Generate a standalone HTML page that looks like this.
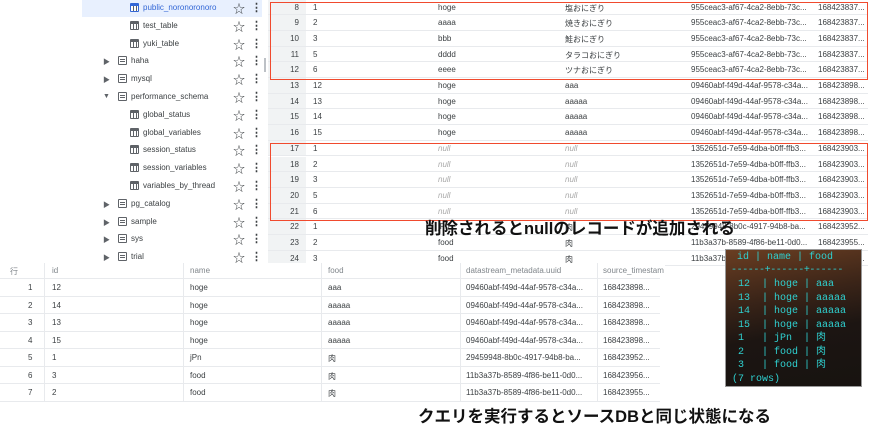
<!DOCTYPE html><html><head><meta charset="utf-8"><style>
*{margin:0;padding:0;box-sizing:border-box}
body{width:883px;height:426px;background:#fff;position:relative;overflow:hidden;font-family:"Liberation Sans","Noto Sans CJK JP",sans-serif;font-size:8px;color:#3c4043}
.a{position:absolute;white-space:nowrap}
.sr{position:absolute;left:82px;width:180px;height:18px}
.ic{position:absolute;width:9px;height:9px;border:1.3px solid #5f6368;border-radius:1px}
.ic::after{content:"";position:absolute;left:1px;right:1px;top:2px;height:1px;background:#5f6368;box-shadow:0 2px 0 #5f6368}
.tt{position:absolute;width:9px;height:9px;background:#5f6368;border-radius:1px}
.tt::after{content:"";position:absolute;left:1px;right:1px;top:3px;bottom:1px;background:repeating-linear-gradient(90deg,#fff 0 2px,#5f6368 2px 3px)}
.g{position:absolute;left:268px;width:600px;height:15.7px;border-bottom:1px solid #e8eaed}
.g span{position:absolute;top:3px}
.rn{position:absolute;left:0;top:0;width:38px;height:100%;background:#f1f3f4;text-align:right;padding-right:7px;padding-top:3px}
.b{position:absolute;left:0;width:660px;height:17.5px;border-bottom:1px solid #e8eaed}
.b span{position:absolute;top:4px}
.t{position:absolute;left:12px;font-family:"Liberation Mono","Noto Sans CJK JP",monospace;font-size:10px;line-height:12px;height:12px;color:#2fd0d0;white-space:pre}
.red{position:absolute;border:1.5px solid #f04a2e}
.cap{position:absolute;font-weight:bold;font-size:16.5px;color:#111;white-space:nowrap}
</style></head><body>
<div class="sr" style="top:0;height:17px;background:#e8f0fe"></div>
<div id="side"></div>
<div class="a" style="left:264px;top:58px;width:2px;height:14px;background:#bdc1c6"></div>
<div id="grid"></div>
<div class="red" style="left:270px;top:2px;width:598px;height:78px"></div>
<div class="red" style="left:270px;top:143px;width:598px;height:78px"></div>
<div id="bot" class="a" style="left:0;top:263px;width:665px;height:140px;background:#fff"></div>
<div class="a" style="left:725px;top:249px;width:137px;height:138px;background:linear-gradient(170deg,#6a3e22 0%,#3a2418 35%,#1c1512 60%,#171310 100%);border:1px solid #999"></div>
<div class="t" style="left:737px;top:252px">id | name | food</div>
<div class="t" style="left:731px;top:265px;letter-spacing:-0.4px">------+------+------</div>
<div class="t" style="left:738px;top:279px">12  | hoge | aaa</div>
<div class="t" style="left:738px;top:293px">13  | hoge | aaaaa</div>
<div class="t" style="left:738px;top:306px">14  | hoge | aaaaa</div>
<div class="t" style="left:738px;top:320px">15  | hoge | aaaaa</div>
<div class="t" style="left:738px;top:333px">1   | jPn  | 肉</div>
<div class="t" style="left:738px;top:347px">2   | food | 肉</div>
<div class="t" style="left:738px;top:360px">3   | food | 肉</div>
<div class="t" style="left:732px;top:374px">(7 rows)</div>
<div class="cap" style="left:425px;top:215px">削除されるとnullのレコードが追加される</div>
<div class="cap" style="left:418px;top:403px">クエリを実行するとソースDBと同じ状態になる</div>
<script>
var s='';
var items=[[2,'public_noronoronoro',1],[2,'test_table'],[2,'yuki_table'],[1,'haha','r'],[1,'mysql','r'],[1,'performance_schema','d'],[2,'global_status'],[2,'global_variables'],[2,'session_status'],[2,'session_variables'],[2,'variables_by_thread'],[1,'pg_catalog','r'],[1,'sample','r'],[1,'sys','r'],[1,'trial','r']];
items.forEach(function(it,i){var y=i*17.8+3;
if(it[0]==1){s+='<div class="a" style="left:103px;top:'+(y+1)+'px;font-size:7px;color:#5f6368">'+(it[2]=='d'?'▼':'▶')+'</div><div class="ic" style="left:118px;top:'+y+'px"></div><div class="a" style="left:131px;top:'+y+'px">'+it[1]+'</div>';}
else{s+='<div class="tt" style="left:130px;top:'+y+'px;'+(it[2]?'background:#3367d6':'')+'"></div><div class="a" style="left:143px;top:'+y+'px;'+(it[2]?'color:#3367d6':'')+'">'+it[1]+'</div>';}
s+='<div class="a" style="left:233px;top:'+(y-3)+'px;font-size:12px;color:#3c4043">☆</div><div class="a" style="left:251px;top:'+(y-2)+'px;font-size:11px;font-weight:bold;color:#3c4043">⋮</div>';});
document.getElementById('side').innerHTML=s;
var g='';
var rows=[[1,'hoge','塩おにぎり','955ceac3-af67-4ca2-8ebb-73c...','168423837...'],[2,'aaaa','焼きおにぎり','955ceac3-af67-4ca2-8ebb-73c...','168423837...'],[3,'bbb','鮭おにぎり','955ceac3-af67-4ca2-8ebb-73c...','168423837...'],[5,'dddd','タラコおにぎり','955ceac3-af67-4ca2-8ebb-73c...','168423837...'],[6,'eeee','ツナおにぎり','955ceac3-af67-4ca2-8ebb-73c...','168423837...'],
[12,'hoge','aaa','09460abf-f49d-44af-9578-c34a...','168423898...'],[13,'hoge','aaaaa','09460abf-f49d-44af-9578-c34a...','168423898...'],[14,'hoge','aaaaa','09460abf-f49d-44af-9578-c34a...','168423898...'],[15,'hoge','aaaaa','09460abf-f49d-44af-9578-c34a...','168423898...'],
[1,'N','N','1352651d-7e59-4dba-b0ff-ffb3...','168423903...'],[2,'N','N','1352651d-7e59-4dba-b0ff-ffb3...','168423903...'],[3,'N','N','1352651d-7e59-4dba-b0ff-ffb3...','168423903...'],[5,'N','N','1352651d-7e59-4dba-b0ff-ffb3...','168423903...'],[6,'N','N','1352651d-7e59-4dba-b0ff-ffb3...','168423903...'],
[1,'jPn','肉','29459948-8b0c-4917-94b8-ba...','168423952...'],[2,'food','肉','11b3a37b-8589-4f86-be11-0d0...','168423955...'],[3,'food','肉','11b3a37b-8589-4f86-be11-0d0...','168423955...']];
function c(v){return v=='N'?'<i style="color:#aaa">null</i>':v}
rows.forEach(function(r,i){var y=i*15.7-0.5;
g+='<div class="g" style="top:'+y+'px"><div class="rn">'+(i+8)+'</div><span style="left:45px">'+r[0]+'</span><span style="left:170px">'+c(r[1])+'</span><span style="left:297px">'+c(r[2])+'</span><span style="left:423px">'+r[3]+'</span><span style="left:550px">'+r[4]+'</span></div>';});
document.getElementById('grid').innerHTML=g;
var b='<div class="b" style="top:0;height:16px;background:#fff;color:#80868b"><span style="left:10px;top:3px">行</span><span style="left:52px;top:3px">id</span><span style="left:190px;top:3px">name</span><span style="left:328px;top:3px">food</span><span style="left:466px;top:3px">datastream_metadata.uuid</span><span style="left:603px;top:3px">source_timestam</span></div>';
var br=[[12,'hoge','aaa','09460abf-f49d-44af-9578-c34a...','168423898...'],[14,'hoge','aaaaa','09460abf-f49d-44af-9578-c34a...','168423898...'],[13,'hoge','aaaaa','09460abf-f49d-44af-9578-c34a...','168423898...'],[15,'hoge','aaaaa','09460abf-f49d-44af-9578-c34a...','168423898...'],[1,'jPn','肉','29459948-8b0c-4917-94b8-ba...','168423952...'],[3,'food','肉','11b3a37b-8589-4f86-be11-0d0...','168423956...'],[2,'food','肉','11b3a37b-8589-4f86-be11-0d0...','168423955...']];
br.forEach(function(r,i){var y=16+i*17.5;
b+='<div class="b" style="top:'+y+'px"><span style="left:28px">'+(i+1)+'</span><span style="left:52px">'+r[0]+'</span><span style="left:190px">'+r[1]+'</span><span style="left:328px">'+r[2]+'</span><span style="left:466px">'+r[3]+'</span><span style="left:603px">'+r[4]+'</span></div>';});
[44,183,321,460,597].forEach(function(x){b+='<div class="a" style="left:'+x+'px;top:0;width:1px;height:139px;background:#e8eaed"></div>'});
document.getElementById('bot').innerHTML=b;
</script>
</body></html>
